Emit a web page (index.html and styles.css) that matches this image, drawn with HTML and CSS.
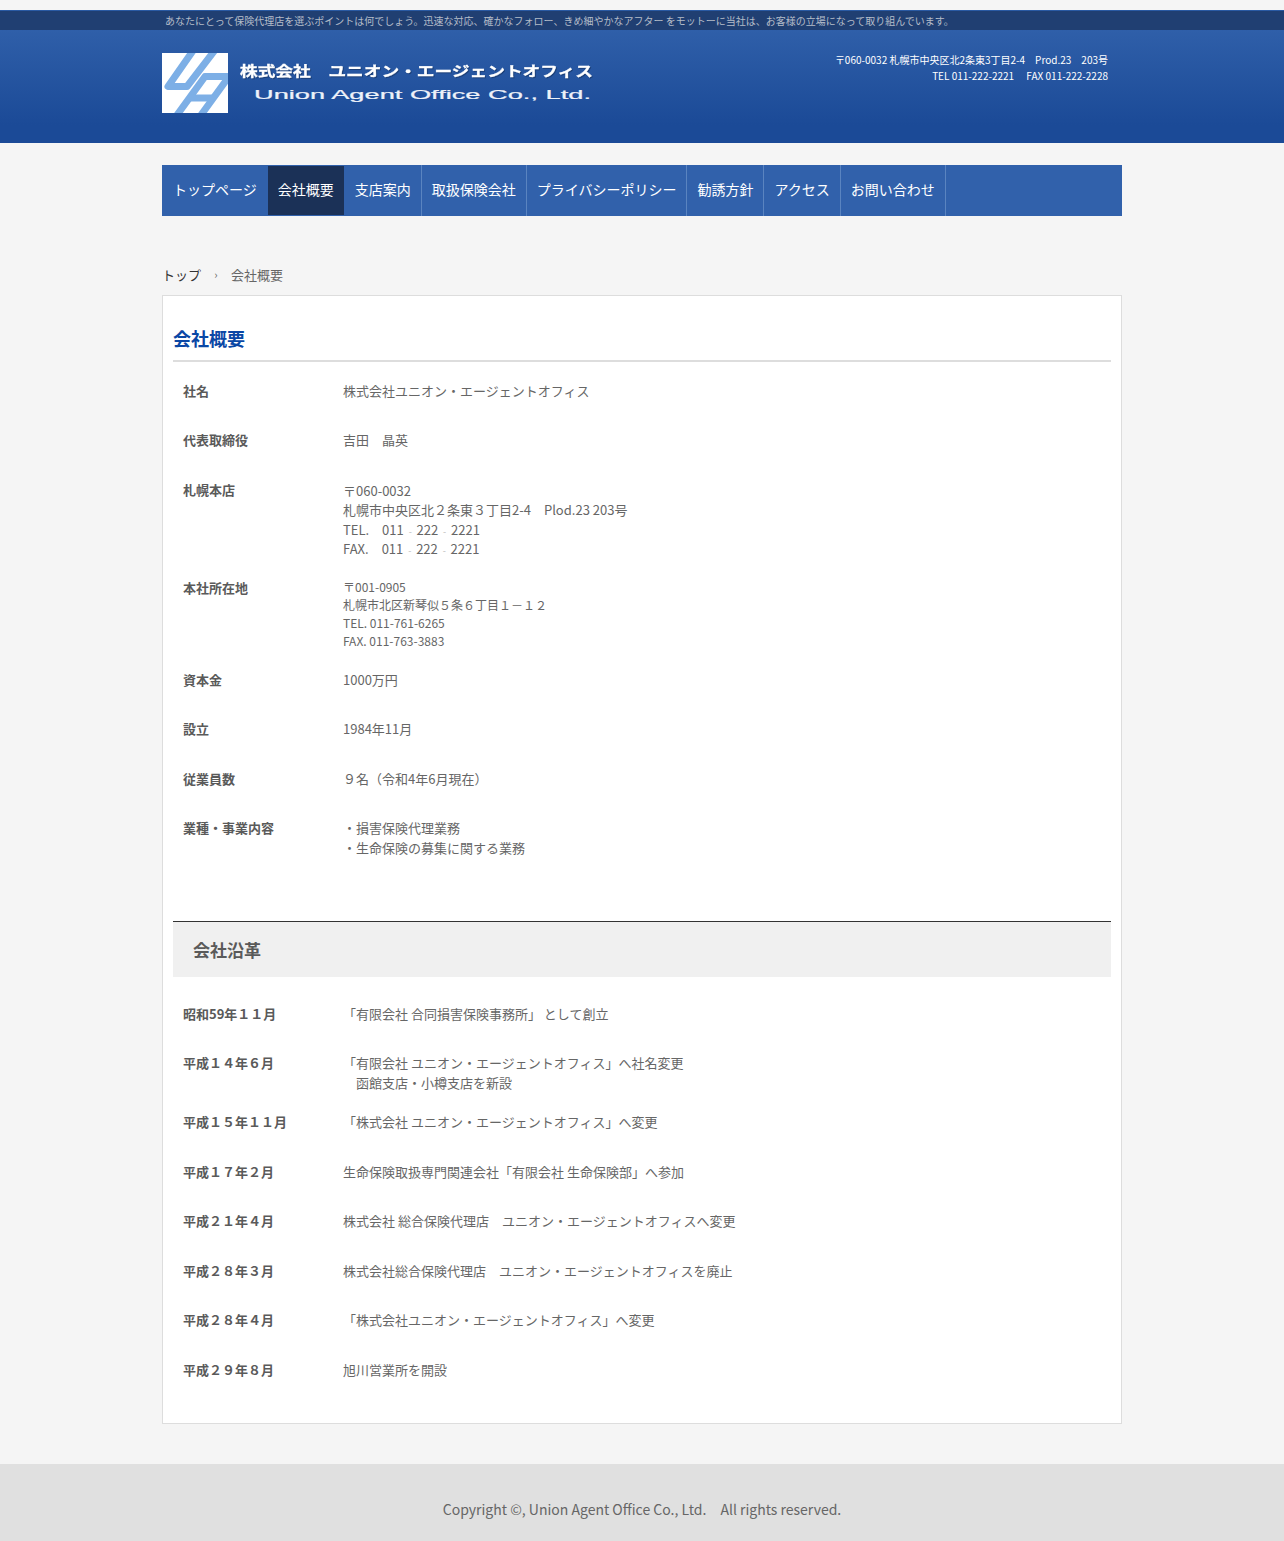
FILE: index.html
```html
<!DOCTYPE html>
<html lang="ja">
<head>
<meta charset="utf-8">
<title>会社概要 | 株式会社ユニオン・エージェントオフィス</title>
<link rel="stylesheet" href="styles.css">
</head>
<body>
<header class="site-header">
  <div class="tagline-bar">
    <div class="wrap"><p class="tagline">あなたにとって保険代理店を選ぶポイントは何でしょう。迅速な対応、確かなフォロー、きめ細やかなアフター をモットーに当社は、お客様の立場になって取り組んでいます。</p></div>
  </div>
  <div class="brand wrap">
    <svg class="logo" width="432" height="60" viewBox="0 0 432 60" role="img" aria-label="株式会社 ユニオン・エージェントオフィス">
      <defs><clipPath id="mark-clip"><rect width="66" height="60"/></clipPath></defs>
      <rect class="logo-bg" width="66" height="60"/>
      <g class="logo-mark" clip-path="url(#mark-clip)">
        <path d="M31.5 -3 L6 33.5 L25 33.5 L53 -3"/>
        <path d="M15 62 L43 23.5 L67 23.5 L39 62"/>
        <path d="M28 45 L52 45"/>
      </g>
      <text class="logo-jp" x="78" y="23" textLength="353" lengthAdjust="spacingAndGlyphs">株式会社　ユニオン・エージェントオフィス</text>
      <text class="logo-en" x="92" y="46" textLength="337" lengthAdjust="spacingAndGlyphs">Union Agent Office Co., Ltd.</text>
    </svg>
    <address class="contact">〒060-0032 札幌市中央区北2条東3丁目2-4　Prod.23　203号<br>TEL 011-222-2221　 FAX 011-222-2228</address>
  </div>
</header>

<main class="wrap">
  <nav class="global-nav">
    <a class="nav-item nav-first" href="#">トップページ</a>
    <a class="nav-item nav-current" href="#">会社概要</a>
    <a class="nav-item" href="#">支店案内</a>
    <a class="nav-item" href="#">取扱保険会社</a>
    <a class="nav-item" href="#">プライバシーポリシー</a>
    <a class="nav-item" href="#">勧誘方針</a>
    <a class="nav-item" href="#">アクセス</a>
    <a class="nav-item" href="#">お問い合わせ</a>
  </nav>

  <div class="breadcrumb"><a href="#">トップ</a><span class="crumb-sep">›</span><span>会社概要</span></div>

  <section class="card">
    <h1 class="page-title">会社概要</h1>
    <dl class="info">
      <div class="row"><dt>社名</dt><dd>株式会社ユニオン・エージェントオフィス</dd></div>
      <div class="row"><dt>代表取締役</dt><dd>吉田　晶英</dd></div>
      <div class="row"><dt>札幌本店</dt><dd class="address">〒060-0032<br>札幌市中央区北２条東３丁目2-4　Plod.23 203号<br>TEL.　011 <span class="dash">-</span> 222 <span class="dash">-</span> 2221<br>FAX.　011 <span class="dash">-</span> 222 <span class="dash">-</span> 2221</dd></div>
      <div class="row"><dt>本社所在地</dt><dd class="small">〒001-0905<br>札幌市北区新琴似５条６丁目１－１２<br>TEL. 011-761-6265<br>FAX. 011-763-3883</dd></div>
      <div class="row"><dt>資本金</dt><dd>1000万円</dd></div>
      <div class="row"><dt>設立</dt><dd>1984年11月</dd></div>
      <div class="row"><dt>従業員数</dt><dd>９名（令和4年6月現在）</dd></div>
      <div class="row"><dt>業種・事業内容</dt><dd>・損害保険代理業務<br>・生命保険の募集に関する業務</dd></div>
    </dl>

    <h2 class="section-title">会社沿革</h2>
    <dl class="info history">
      <div class="row"><dt>昭和59年１１月</dt><dd>「有限会社 合同損害保険事務所」 として創立</dd></div>
      <div class="row"><dt>平成１４年６月</dt><dd>「有限会社 ユニオン・エージェントオフィス」へ社名変更<br>　函館支店・小樽支店を新設</dd></div>
      <div class="row"><dt>平成１５年１１月</dt><dd>「株式会社 ユニオン・エージェントオフィス」へ変更</dd></div>
      <div class="row"><dt>平成１７年２月</dt><dd>生命保険取扱専門関連会社「有限会社 生命保険部」へ参加</dd></div>
      <div class="row"><dt>平成２１年４月</dt><dd>株式会社 総合保険代理店　ユニオン・エージェントオフィスへ変更</dd></div>
      <div class="row"><dt>平成２８年３月</dt><dd>株式会社総合保険代理店　ユニオン・エージェントオフィスを廃止</dd></div>
      <div class="row"><dt>平成２８年４月</dt><dd>「株式会社ユニオン・エージェントオフィス」へ変更</dd></div>
      <div class="row"><dt>平成２９年８月</dt><dd>旭川営業所を開設</dd></div>
    </dl>
  </section>
</main>

<footer class="site-footer">Copyright ©, Union Agent Office Co., Ltd.　All rights reserved.</footer>
</body>
</html>
```
FILE: styles.css
```css
* { box-sizing: border-box; }
html, body { margin: 0; padding: 0; }
body {
  background: #f5f5f5;
  color: #666;
  font-family: "Noto Sans CJK JP", "Noto Sans", sans-serif;
  font-size: 13px;
  line-height: 19.5px;
  padding-top: 10px;
}
a { color: inherit; text-decoration: none; }
.wrap { width: 960px; margin: 0 auto; }

.site-header { background: linear-gradient(#3061ab 20px, #2f5fa9 20px, #1b4a97 115px); }
.tagline-bar { background: #203f72; border-top: 1px solid #2a5aa3; height: 20px; }
.tagline { margin: 0; padding-left: 3px; color: #b5bdc9; font-size: 10px; line-height: 20px; white-space: nowrap; }
.brand { display: flex; justify-content: space-between; height: 113px; padding: 23px 14px 0 0; }
.logo { display: block; flex: none; }
.logo-bg { fill: #fff; }
.logo-mark path { fill: none; stroke: #7dafe6; stroke-width: 7; stroke-linejoin: round; }
.logo-jp { fill: #fff; stroke: #fff; stroke-width: .3; font-size: 14px; font-weight: 700; font-family: "Noto Sans CJK JP", sans-serif; filter: drop-shadow(1px 1px 0 rgba(0, 0, 0, .25)); }
.logo-en { fill: #eef2f9; stroke: #eef2f9; stroke-width: .2; font-size: 12px; font-weight: 400; font-family: "Liberation Sans", sans-serif; }
.contact { color: #fff; font-style: normal; font-size: 10px; line-height: 16px; text-align: right; margin-top: -1px; white-space: pre-line; }

.global-nav { display: flex; height: 51px; margin-top: 22px; background: #3161ab; }
.nav-item { display: block; padding: 0 10px; border-right: 1px solid #5a84c0; color: #fff; font-size: 14px; line-height: 49px; white-space: nowrap; }
.nav-first { padding: 0 11px; border-right: 0; }
.nav-current { margin: 1px 0; background: #1b3157; border-right: 1px solid #3161ab; line-height: 47px; }

.breadcrumb { display: flex; margin-top: 49px; height: 20px; line-height: 19px; }
.breadcrumb a { color: #333; }
.crumb-sep { width: 30px; text-align: center; font-size: 11px; color: #666; }

.card { margin-top: 10px; height: 1129px; padding: 0 10px; background: #fff; border: 1px solid #ddd; }
.page-title { margin: 0; padding-top: 27px; height: 66px; border-bottom: 2px solid #ddd; color: #0a47a5; font-size: 18px; line-height: 30px; font-weight: 700; }
.info { margin: 8.8px 0 0; }
.row { display: flex; min-height: 49.5px; padding: 10px; }
.row dt { flex: none; width: 160px; font-weight: 700; color: #5a5a5a; }
.row dd { margin: 0; }
.row .address { margin: 1px 0 -1px; }
.row .small { font-size: 12px; line-height: 18px; }
.dash { display: inline-block; width: 7px; color: #bbb; font-size: 9px; line-height: 1; text-align: center; }

.section-title { margin: 53.5px 0 0; height: 56px; padding: 0 20px; background: #f0f0f0; border-top: 1px solid #333; color: #5a5a5a; font-size: 17px; line-height: 56px; font-weight: 700; }
.history { margin-top: 17.2px; }

.site-footer { margin-top: 40px; height: 77px; background: #e0e0e0; color: #666; font-size: 14px; line-height: 90px; text-align: center; overflow: hidden; }
```
